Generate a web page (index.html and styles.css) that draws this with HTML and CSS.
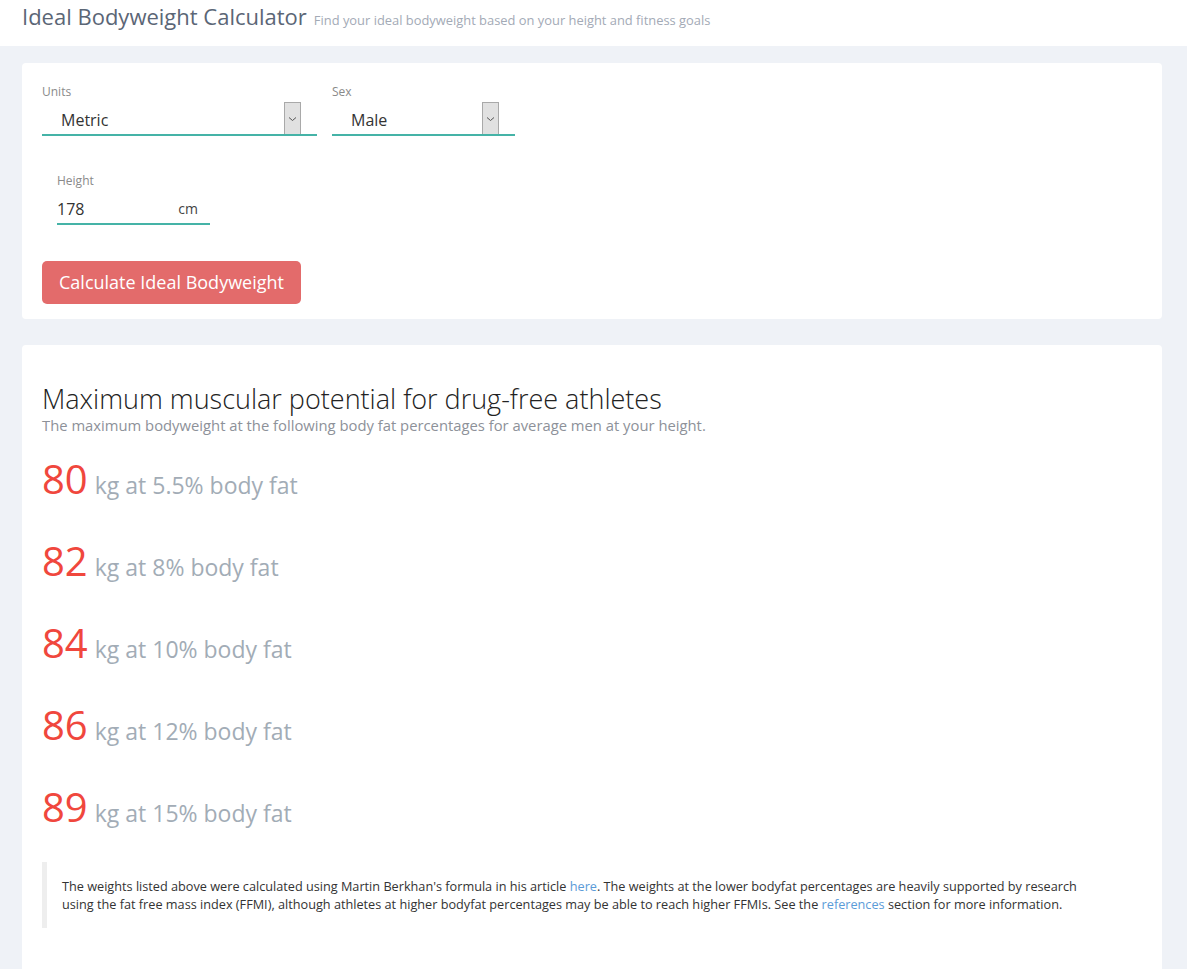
FILE: index.html
```html
<!DOCTYPE html>
<html>
<head>
<meta charset="utf-8">
<link rel="stylesheet" href="styles.css">
</head>
<body>
<header class="topbar">
  <h1 class="title">Ideal Bodyweight Calculator</h1>
  <span class="tagline">Find your ideal bodyweight based on your height and fitness goals</span>
</header>
<main class="page">
  <section class="card form-card">
    <div class="row">
      <div class="field field-units">
        <label class="label">Units</label>
        <div class="select">
          <span class="select-value">Metric</span>
          <span class="select-arrow"><svg width="9" height="6" viewBox="0 0 9 6"><path d="M1 1.5 L4.5 4.5 L8 1.5" fill="none" stroke="#555" stroke-width="1"/></svg></span>
        </div>
      </div>
      <div class="field field-sex">
        <label class="label">Sex</label>
        <div class="select">
          <span class="select-value">Male</span>
          <span class="select-arrow"><svg width="9" height="6" viewBox="0 0 9 6"><path d="M1 1.5 L4.5 4.5 L8 1.5" fill="none" stroke="#555" stroke-width="1"/></svg></span>
        </div>
      </div>
    </div>
    <div class="field field-height">
      <label class="label">Height</label>
      <div class="input">
        <span class="input-value">178</span>
        <span class="unit">cm</span>
      </div>
    </div>
    <button class="btn">Calculate Ideal Bodyweight</button>
  </section>
  <section class="card result-card">
    <h2 class="heading">Maximum muscular potential for drug-free athletes</h2>
    <p class="subheading">The maximum bodyweight at the following body fat percentages for average men at your height.</p>
    <div class="results">
      <div class="result"><span class="num">80</span><span class="desc">kg at 5.5% body fat</span></div>
      <div class="result"><span class="num">82</span><span class="desc">kg at 8% body fat</span></div>
      <div class="result"><span class="num">84</span><span class="desc">kg at 10% body fat</span></div>
      <div class="result"><span class="num">86</span><span class="desc">kg at 12% body fat</span></div>
      <div class="result"><span class="num">89</span><span class="desc">kg at 15% body fat</span></div>
    </div>
    <blockquote class="note">The weights listed above were calculated using Martin Berkhan's formula in his article <a href="#">here</a>. The weights at the lower bodyfat percentages are heavily supported by research using the fat free mass index (FFMI), although athletes at higher bodyfat percentages may be able to reach higher FFMIs. See the <a href="#">references</a> section for more information.</blockquote>
  </section>
</main>
</body>
</html>
```

FILE: styles.css
```css
* { box-sizing: border-box; }
html, body { margin: 0; padding: 0; }
body {
  background: #eff2f7;
  font-family: "Open Sans", "Liberation Sans", sans-serif;
  color: #333;
}
.topbar {
  background: #fff;
  height: 46px;
  padding: 1px 22px 0;
  display: flex;
  align-items: baseline;
  gap: 7px;
}
.title {
  margin: 0;
  font-size: 22px;
  font-weight: 400;
  color: #5b6676;
  line-height: 30px;
}
.tagline {
  font-size: 12.9px;
  color: #a3aab6;
}
.page {
  padding: 17px 25px 0 22px;
  display: flex;
  flex-direction: column;
  gap: 26px;
}
.card {
  background: #fff;
  border-radius: 4px;
}
.form-card {
  padding: 21px 20px 16px;
  height: 256px;
}
.row {
  display: flex;
  gap: 15px;
}
.label {
  display: block;
  font-size: 12px;
  color: #8a8a8a;
  line-height: 16px;
}
.field-units { width: 275px; }
.field-sex { width: 183px; }
.select {
  margin-top: 3px;
  height: 33px;
  border-bottom: 2px solid #45b3a7;
  display: flex;
  align-items: center;
  justify-content: space-between;
  padding-left: 19px;
  padding-right: 16px;
}
.select-value {
  font-size: 16px;
  color: #333;
  padding-top: 2px;
}
.select-arrow {
  width: 17px;
  height: 32px;
  background: #e1e1e1;
  border: 1px solid #a9a9a9;
  border-bottom: 0;
  display: flex;
  align-items: center;
  justify-content: center;
  align-self: flex-end;
}
.field-height {
  width: 153px;
  margin: 37px 0 0 15px;
}
.input {
  margin-top: 4px;
  height: 32px;
  padding-top: 5px;
  border-bottom: 2px solid #45b3a7;
  display: flex;
  align-items: flex-start;
  justify-content: space-between;
  padding-right: 12px;
}
.input-value { font-size: 16px; color: #333; line-height: 22px; }
.unit { font-size: 14px; color: #444; line-height: 22px; }
.btn {
  display: block;
  margin-top: 36px;
  width: 259px;
  height: 43px;
  border: 0;
  border-radius: 5px;
  background: #e36b6b;
  color: #fff;
  font-family: "Open Sans", "Liberation Sans", sans-serif;
  font-size: 18px;
  padding: 0 0 2px;
}
.result-card {
  padding: 36px 20px 40px;
  min-height: 640px;
}
.heading {
  margin: 0;
  font-size: 27px;
  font-weight: 300;
  color: #222;
  line-height: 36px;
}
.subheading {
  margin: 0;
  font-size: 14.8px;
  color: #8d9199;
  line-height: 16px;
}
.results {
  margin-top: 19px;
  display: flex;
  flex-direction: column;
  gap: 28px;
}
.result {
  display: flex;
  align-items: baseline;
  gap: 7px;
  height: 54px;
}
.num {
  font-size: 40px;
  color: #f0473d;
  line-height: 54px;
}
.desc {
  font-size: 23px;
  color: #a2acb6;
}
.note {
  margin: 28px 0 0;
  border-left: 5px solid #eee;
  padding: 15px 50px 15px 15px;
  font-size: 12.7px;
  line-height: 18px;
  color: #333;
}
.note a { color: #5b9bd8; text-decoration: none; }
```
